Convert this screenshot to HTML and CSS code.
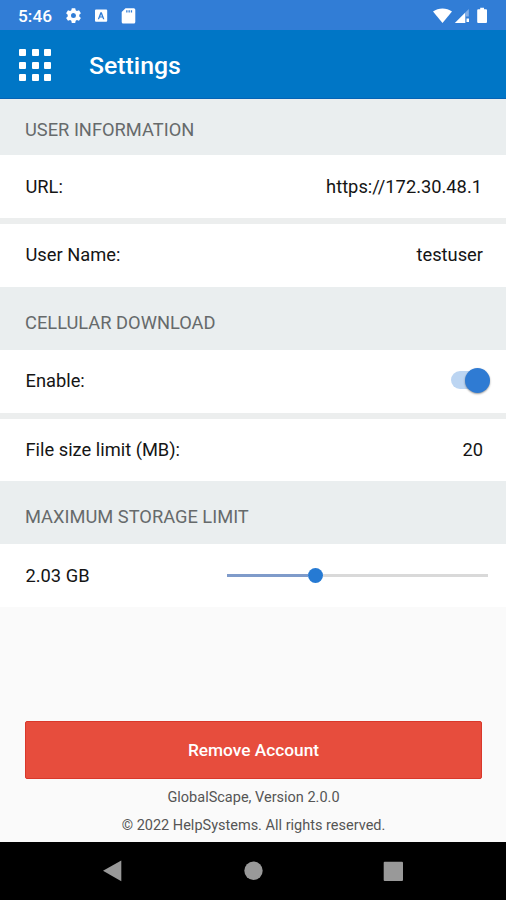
FILE: index.html
```html
<!DOCTYPE html>
<html lang="en">
<head>
<meta charset="utf-8">
<title>Settings</title>
<link rel="stylesheet" href="styles.css">
</head>
<body>
<div class="screen">
  <div class="status">
    <span class="time">5:46</span>
    <svg class="status-left" width="72" height="18" viewBox="0 0 72 18" fill="#fff">
      <path fill-rule="evenodd" d="M6.800 1.200h3.400l.5 2.100 1.200.7 2.100-.7 1.900 2.900-1.600 1.600v1.600l1.600 1.500-1.900 2.900-2.100-.7-1.200.7-.5 2.100H6.800l-.5-2.100-1.200-.7-2.100.7-1.900-2.900 1.600-1.500V7.800L1.100 6.200 3 3.300l2.100.7 1.200-.7zM8.500 6.100a2.500 2.500 0 1 0 0 5 2.500 2.500 0 0 0 0-5z"/>
      <path fill-rule="evenodd" d="M31 2.500h10.200a1 1 0 0 1 1 1v10.300a1 1 0 0 1-1 1H31a1 1 0 0 1-1-1V3.500a1 1 0 0 1 1-1zM35.400 5.200l-2.600 7h1.300l.7-1.700h2.600l.7 1.700h1.300l-2.600-7zm.7 2 .8 2.200h-1.600z"/>
      <path fill-rule="evenodd" d="M60.500 1.200h8.300a1.500 1.500 0 0 1 1.500 1.500v12.200a1.500 1.500 0 0 1-1.500 1.500H58.200a1.500 1.500 0 0 1-1.500-1.500V5zM61.200 3.200v2.300h1.300V3.200zm2.300 0v2.300h1.300V3.200zm2.300 0v2.300h1.300V3.200z"/>
    </svg>
    <svg class="status-right" width="60" height="18" viewBox="0 0 60 18" fill="#fff">
      <path d="M1 4.500C6.500.4 14.500.4 20 4.500L10.500 16z"/>
      <path d="M33.300 5.500V16H22.800z"/>
      <path d="M36.800 2v7.500h-3.500V5.500z" fill="#83aee6"/>
      <path d="M34.500 11.500h2.500v3.500h-2.500z"/>
      <path d="M46.200 2.300h2V.8h3.800v1.500h2a1 1 0 0 1 1 1V15a1 1 0 0 1-1 1h-7.800a1 1 0 0 1-1-1V3.300a1 1 0 0 1 1-1z"/>
    </svg>
  </div>
  <header class="appbar">
    <div class="apps"><i></i><i></i><i></i><i></i><i></i><i></i><i></i><i></i><i></i></div>
    <h1 class="title">Settings</h1>
  </header>
  <main class="content">
    <h2 class="section first">USER INFORMATION</h2>
    <div class="row"><span>URL:</span><span class="url">https://172.30.48.1</span></div>
    <div class="row divided"><span>User Name:</span><span>testuser</span></div>
    <h2 class="section">CELLULAR DOWNLOAD</h2>
    <div class="row"><span>Enable:</span><span class="switch"><span class="thumb"></span></span></div>
    <div class="row divided"><span>File size limit (MB):</span><span>20</span></div>
    <h2 class="section">MAXIMUM STORAGE LIMIT</h2>
    <div class="row"><span>2.03 GB</span><span class="slider"><span class="filled"></span><span class="knob"></span><span class="rest"></span></span></div>
  </main>
  <footer class="footer">
    <button class="remove">Remove Account</button>
    <p class="version">GlobalScape, Version 2.0.0</p>
    <p class="copyright">© 2022 HelpSystems. All rights reserved.</p>
  </footer>
  <nav class="nav">
    <svg width="506" height="58" viewBox="0 0 506 58" fill="#999">
      <path d="M103 28.700 121.300 18.500v20.700z"/>
      <circle cx="253.500" cy="28.700" r="9.200"/>
      <rect x="383.700" y="19.700" width="19.300" height="19.300" rx="1"/>
    </svg>
  </nav>
</div>
</body>
</html>
```
FILE: styles.css
```css
* { box-sizing: border-box; }
body { margin: 0; font-family: Roboto, "Liberation Sans", sans-serif; }
h1, h2, p { margin: 0; font-weight: 400; }
.screen { width: 506px; height: 900px; display: flex; flex-direction: column; background: #fafafa; overflow: hidden; }
.status { height: 30px; background: #317dd6; color: #fff; display: flex; align-items: center; padding: 1px 14px 0 18px; }
.time { font-size: 17.300px; font-weight: 500; line-height: 20px; width: 47px; }
.status-right { margin-left: auto; }
.appbar { height: 69px; background: #0076c6; border-bottom: 1px solid #0563b5; display: flex; align-items: center; padding: 2px 0 0 19px; }
.apps { display: grid; grid-template-columns: repeat(3, 7px); grid-auto-rows: 7px; gap: 5.500px; width: 70px; }
.apps i { background: #fff; border-radius: 1px; }
.title { font-size: 24.800px; font-weight: 500; color: #fff; line-height: 30px; padding-top: 2px; }
.section { height: 63px; background: #eaeeef; color: #666a6b; font-size: 18.300px; line-height: 24px; padding: 24px 25px 0; }
.section.first { height: 56px; padding-top: 19px; }
.row { height: 63px; background: #fff; color: #151515; display: flex; align-items: center; justify-content: space-between; padding: 0 23px 0 25.500px; font-size: 18.300px; line-height: 24px; }
.url { margin-right: 1px; }
.divided { height: 68.500px; border-top: 6px solid #eceeee; }
.switch { width: 39px; height: 18px; margin: -2px -7px 0 0; border-radius: 9px; background: linear-gradient(to right, #bcd5f2 26px, transparent 26px); display: flex; align-items: center; justify-content: flex-end; }
.thumb { width: 25px; height: 25px; flex: none; border-radius: 50%; background: #2f7bd3; box-shadow: 0 1px 2px rgba(0, 0, 0, .4); }
.slider { width: 261px; margin-right: -5px; display: flex; align-items: center; }
.filled { width: 81px; height: 3px; background: #7f9bca; }
.knob { width: 15px; height: 15px; border-radius: 50%; background: #267ad3; }
.rest { flex: 1; height: 3px; background: #d9d9d9; }
.footer { margin-top: auto; padding: 0 24px 0 25px; color: #555; text-align: center; font-size: 14.500px; }
.remove { display: block; width: 100%; height: 58px; border: 1px solid #d9382b; border-radius: 2px; background: #e74d3d; color: #fff; font: 500 17.300px/22px Roboto, sans-serif; padding: 0; }
.version { line-height: 20px; margin-top: 9px; }
.copyright { line-height: 20px; margin: 8px 0 6px; }
.nav { height: 58px; background: #000; }
.nav svg { display: block; }
```
